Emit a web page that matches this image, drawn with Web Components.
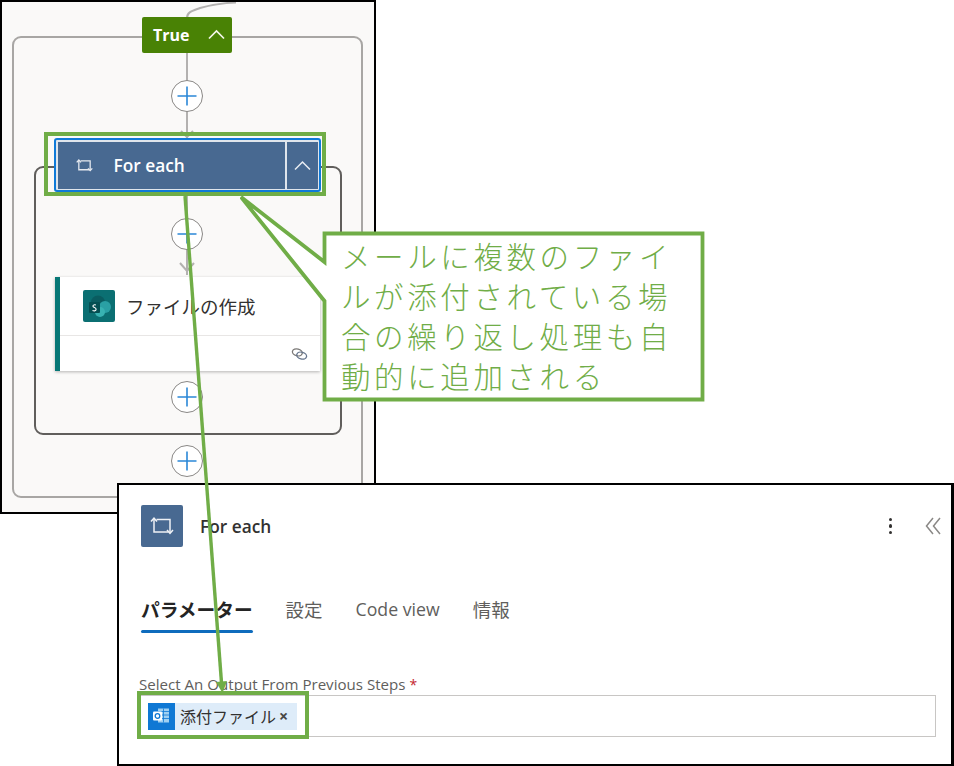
<!DOCTYPE html>
<html lang="ja"><head><meta charset="utf-8"><style>
html,body{margin:0;padding:0;background:#fff}
body{width:954px;height:766px;overflow:hidden;font-family:"Open Sans","Noto Sans CJK JP",sans-serif}
</style></head><body>
<annotated-shot>
  <flow-window>
    <scope-box slot="scopes" style="--x:12px;--y:36px;--w:351px;--h:462px;--c:#a8a6a4"></scope-box>
    <scope-box slot="scopes" style="--x:34px;--y:166px;--w:308px;--h:269px;--c:#605e5c"></scope-box>
    <flow-add style="--cy:96px"></flow-add>
    <flow-add style="--cy:234px"></flow-add>
    <flow-add style="--cy:397px"></flow-add>
    <flow-add style="--cy:461px"></flow-add>
    <true-node>True</true-node>
    <foreach-node>For each</foreach-node>
    <action-card>ファイルの作成</action-card>
  </flow-window>
  <detail-panel></detail-panel>
  <callout-note>
    <span>メールに複数のファイ</span><span>ルが添付されている場</span><span>合の繰り返し処理も自</span><span>動的に追加される</span>
  </callout-note>
</annotated-shot>
<script>
const loop=(w,h,c,sw)=>`<svg width="${w}" height="${h}" viewBox="0 0 24 18" fill="none" stroke="${c}" stroke-width="${sw}"><path d="M4 1.500V15H18.500"/><path d="M6.500 2.500H20V16"/><path d="M1 4.500 4 1.200 7 4.500M17 13l3 3.300 3-3.300"/></svg>`;
function def(name,html){customElements.define(name,class extends HTMLElement{constructor(){super();this.attachShadow({mode:'open'}).innerHTML=html}})}
def('annotated-shot',`<style>:host{display:block;position:relative;width:954px;height:766px}
svg{position:absolute;left:0;top:0;pointer-events:none}</style>
<slot></slot>
<svg width="954" height="766" viewBox="0 0 954 766" fill="none" stroke="#70ad47">
<rect x="46" y="134" width="278" height="60" stroke-width="4"/>
<rect x="139" y="693" width="168" height="44" stroke-width="4"/>
<path d="M185 196 221.600 684" stroke-width="3.400"/>
<path d="M216 682 222.500 693 227 681Z" fill="#70ad47" stroke="none"/>
</svg>`);
def('flow-window',`<style>:host{display:block;position:absolute;left:0;top:0;width:376px;height:514px;box-sizing:border-box;border:2px solid #000;background:#faf9f8;overflow:hidden}
.in{position:absolute;left:-2px;top:-2px;width:376px;height:514px}
svg{position:absolute;left:0;top:0}</style>
<div class="in"><slot name="scopes"></slot>
<svg width="376" height="514" viewBox="0 0 376 514" fill="none" stroke="#b3b1b0" stroke-width="2">
<path d="M187 18C187 12 192 11 200 8 210 5 220 3 236 2.500"/>
<path d="M187 53V140M181 131l6 6 6-6"/>
<path d="M187 192V275M180 263l7 8 7-8"/>
</svg>
<slot></slot></div>`);
def('scope-box',`<style>:host{display:block;position:absolute;left:var(--x);top:var(--y);width:var(--w);height:var(--h);box-sizing:border-box;border:2px solid var(--c);border-radius:9px}</style>`);
def('flow-add',`<style>:host{display:flex;align-items:center;justify-content:center;position:absolute;left:171px;top:calc(var(--cy) - 16px);width:32px;height:32px;box-sizing:border-box;border:1.500px solid #8a8886;border-radius:50%;background:#fff}</style>
<svg width="20" height="20" viewBox="0 0 20 20" stroke="#2b88d8" stroke-width="1.600"><path d="M10 0.500V19.500M0.500 10H19.500"/></svg>`);
def('true-node',`<style>:host{display:flex;align-items:center;position:absolute;left:142px;top:17px;width:90px;height:36px;box-sizing:border-box;padding-left:11px;background:#498205;border-radius:2px;color:#fff;font:700 16px "Open Sans",sans-serif}
svg{position:absolute;left:65px;top:12px}</style><slot></slot>
<svg width="19" height="11" viewBox="0 0 19 11" fill="none" stroke="#f4f6ea" stroke-width="1.700"><path d="M2 9.500 9.500 2 17 9.500"/></svg>`);
def('foreach-node',`<style>:host{display:flex;position:absolute;left:54px;top:138px;width:267px;height:54px;box-sizing:border-box;border:2px solid #0f7ad8;border-radius:3px;background:#dfe5ec;padding:1.500px;color:#fff;font:600 17.300px "Open Sans",sans-serif}
.m{flex:1;display:flex;align-items:center;background:#486991;padding-left:18px;gap:21px}
.m svg{flex:none}
.c{width:31px;margin-left:2px;background:#486991;display:flex;align-items:center;justify-content:center}
</style><div class="m">${loop(17,13,'#e6eaf0',1.800)}<span><slot></slot></span></div>
<div class="c"><svg width="19" height="11" viewBox="0 0 19 11" fill="none" stroke="#e8ecf2" stroke-width="1.500"><path d="M2 9.500 9.500 2 17 9.500"/></svg></div>`);
def('action-card',`<style>:host{display:flex;flex-direction:column;position:absolute;left:55px;top:277px;width:265px;height:94px;box-sizing:border-box;background:#fff;border-left:5px solid #077776;box-shadow:0 1px 3px rgba(0,0,0,.28);color:#323130;font:400 18.500px "Noto Sans CJK JP",sans-serif}
.t{height:59px;box-sizing:border-box;display:flex;align-items:center;padding:0 0 0 23px;gap:11px;border-bottom:1.500px solid #e8e6e5}
.b{flex:1;display:flex;justify-content:flex-end;align-items:center;padding-right:12px}
</style><div class="t">
<svg width="32" height="32" viewBox="0 0 32 32"><rect width="32" height="32" rx="2" fill="#0b6f72"/><circle cx="15" cy="12.500" r="7" fill="#0a5c60"/><circle cx="22" cy="17" r="6" fill="#2aa0a4"/><circle cx="17" cy="22" r="5" fill="#38b2b2"/><rect x="6" y="12" width="11" height="11" rx="1" fill="#044f52"/><path d="M9.500 20.500c2 .8 3.600.2 3.600-1.200 0-2-3.200-1.400-3.200-3.200 0-1.200 1.500-1.600 3-1" fill="none" stroke="#fff" stroke-width="1.100"/></svg>
<span><slot></slot></span></div>
<div class="b"><svg width="17" height="12" viewBox="0 0 17 12" fill="none" stroke-width="1.300"><g transform="rotate(15 8.500 6)"><ellipse cx="6" cy="5" rx="5" ry="3.400" stroke="#7a7876"/><ellipse cx="11" cy="7" rx="5" ry="3.400" stroke="#66758c"/></g></svg></div>`);
def('callout-note',`<style>:host{display:block;position:absolute;left:240px;top:195px;width:466px;height:208px}
svg{position:absolute;left:0;top:0}
.t{position:absolute;left:101px;top:40px;display:flex;flex-direction:column;font:300 29.500px/40px "Noto Sans CJK JP",sans-serif;letter-spacing:3.600px;color:#70ad47;white-space:nowrap}
::slotted(span){display:block}</style>
<svg width="466" height="208" viewBox="0 0 466 208"><path d="M84.500 38.500H462.500V204.500H84.500V106L1 2 84.500 67Z" fill="#fff" stroke="#70ad47" stroke-width="3.800"/></svg>
<div class="t"><slot></slot></div>`);
def('detail-panel',`<style>:host{display:block;position:absolute;left:117px;top:483px;width:837px;height:283px;box-sizing:border-box;border:2px solid #000;border-right-width:3px;background:#fff;padding:20px 10px 0 22px;color:#323130}
.h{display:flex;align-items:center;height:42px}
.ic{width:42px;height:42px;background:#486991;border-radius:2px;display:flex;align-items:center;justify-content:center}
.ti{margin-left:17px;font:600 17.300px "Open Sans",sans-serif;flex:1}
.more{display:flex;flex-direction:column;gap:3px;margin-right:33px}
.more i{display:block;width:3.400px;height:3.400px;border-radius:50%;background:#323130}
.tabs{display:flex;margin-top:47px;height:44px;font:400 18.500px "Noto Sans CJK JP",sans-serif;color:#605e5c}
.tab{margin-right:33px;height:38px;line-height:30px;white-space:nowrap}
.tab.on{color:#242424;font-weight:700;font-size:18.700px;position:relative}
.tab.on::after{content:"";position:absolute;left:0;right:0;bottom:-1px;height:3px;border-radius:2px;background:#0f6cbd}
.en{font:400 17.700px/30px "Open Sans",sans-serif}
.lab{margin:37px 0 0 -2px;font:400 15.100px/18px "Open Sans",sans-serif;color:#605e5c;white-space:nowrap}
.lab b{color:#c4262e;font-weight:400;font-size:14px}
.inp{margin:1px 5px 0 -3px;height:42px;box-sizing:border-box;border:1.500px solid #c8c6c4;display:flex;align-items:center;padding-left:9px}
.tok{display:flex;height:27px;background:#deecf9;align-items:center;width:149px;font:400 16px "Noto Sans CJK JP",sans-serif;color:#323130}
.tok .o{width:27px;height:27px;background:#0f78d4;display:flex;align-items:center;justify-content:center;flex:none}
.tok .n{margin-left:5px;white-space:nowrap}
.tok .x{margin-left:3px;font:700 16px "Open Sans",sans-serif;color:#484644}
</style>
<div class="h"><div class="ic">${loop(24,18,'#eef1f5',1.500)}</div><div class="ti">For each</div>
<div class="more"><i></i><i></i><i></i></div>
<svg width="16" height="18" viewBox="0 0 16 18" fill="none" stroke="#8a8886" stroke-width="1.500"><path d="M8 1 1.500 9 8 17M15 1 8.500 9 15 17"/></svg></div>
<div class="tabs"><div class="tab on">パラメーター</div><div class="tab">設定</div><div class="tab en">Code view</div><div class="tab">情報</div></div>
<div class="lab">Select An Output From Previous Steps <b>*</b></div>
<div class="inp"><div class="tok"><div class="o"><svg width="19" height="18" viewBox="0 0 19 18"><rect x="6" y="1.500" width="11" height="14" fill="#9fd0f2"/><path d="M6 4.500h11M6 8h11M6 11.500h11M11.500 1.500v14" stroke="#0f78d4" stroke-width=".8"/><rect x="1" y="4.500" width="9" height="9" rx="1" fill="#fff"/><circle cx="5.500" cy="9" r="2.300" fill="none" stroke="#0f78d4" stroke-width="1.300"/></svg></div><span class="n">添付ファイル</span><span class="x">×</span></div></div>`);
</script>
</body></html>
